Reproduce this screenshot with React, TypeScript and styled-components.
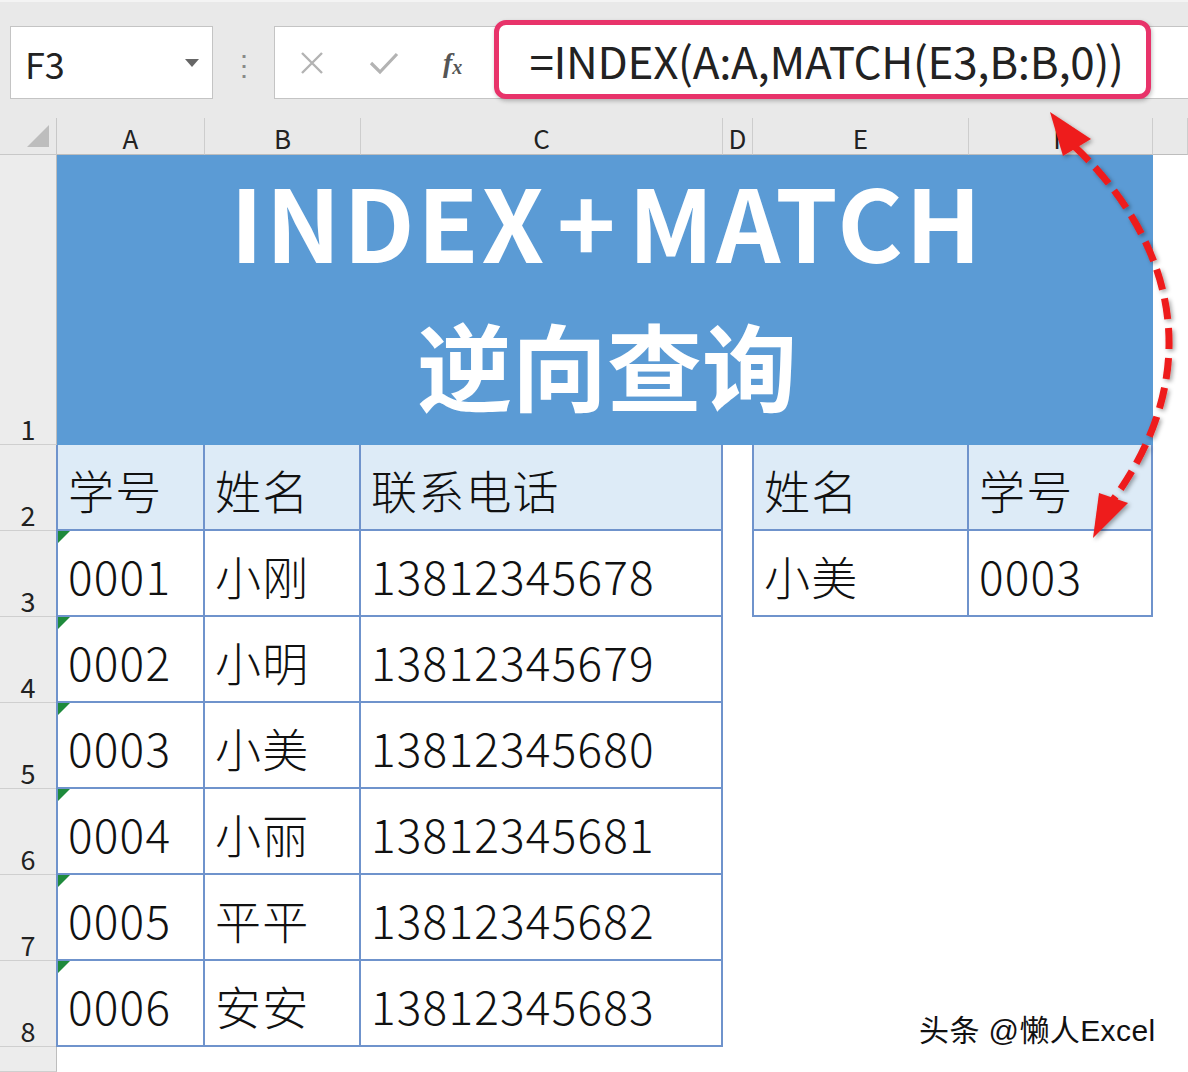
import styled, { createGlobalStyle } from 'styled-components';

const GlobalStyle = createGlobalStyle`
  body {
    margin: 0;
    background: #ffffff;
    overflow: hidden;
  }
  * {
    box-sizing: border-box;
  }
`;

const FONT = `"Noto Sans CJK SC", "Noto Sans", sans-serif`;
const GRID_BLUE = '#6f93cc';

const COLS = [57, 148, 156, 362, 30, 216, 184, 35];
const ROWS = [37, 290, 86, 86, 86, 86, 86, 86, 86, 25];

const students = [
  { id: '0001', name: '小刚', phone: '13812345678' },
  { id: '0002', name: '小明', phone: '13812345679' },
  { id: '0003', name: '小美', phone: '13812345680' },
  { id: '0004', name: '小丽', phone: '13812345681' },
  { id: '0005', name: '平平', phone: '13812345682' },
  { id: '0006', name: '安安', phone: '13812345683' },
];

export default function App() {
  return (
    <Page>
      <GlobalStyle />
      <FormulaBar>
        <NameBox>
          F3
          <DropArrow />
        </NameBox>
        <Grip>⋮</Grip>
        <FormulaBox>
          <ToolIcons>
            <svg width="26" height="26" viewBox="0 0 26 26">
              <path d="M3 3 L23 23 M23 3 L3 23" stroke="#b3b3b3" strokeWidth="2.4" />
            </svg>
            <svg width="30" height="26" viewBox="0 0 30 26">
              <path d="M2 13 L11 22 L28 4" stroke="#b3b3b3" strokeWidth="3.2" fill="none" />
            </svg>
            <Fx>
              f<sub>x</sub>
            </Fx>
          </ToolIcons>
          <Highlight>=INDEX(A:A,MATCH(E3,B:B,0))</Highlight>
        </FormulaBox>
      </FormulaBar>

      <Sheet>
        <Corner>
          <svg width="22" height="22" viewBox="0 0 22 22">
            <path d="M22 0 L22 22 L0 22 Z" fill="#bdbdbd" />
          </svg>
        </Corner>
        {['A', 'B', 'C', 'D', 'E', 'F', ''].map((letter, i) => (
          <ColHeader key={i} $col={i + 2}>
            {letter}
          </ColHeader>
        ))}
        {ROWS.slice(1).map((_, i) => (
          <RowHeader key={i} $row={i + 2}>
            {i < 8 ? i + 1 : ''}
          </RowHeader>
        ))}

        <TitleCell>
          <TitleLatin>
            INDEX<Plus>+</Plus>MATCH
          </TitleLatin>
          <TitleCn>逆向查询</TitleCn>
        </TitleCell>

        <Cell $row={3} $col={2} $head $left>学号</Cell>
        <Cell $row={3} $col={3} $head>姓名</Cell>
        <Cell $row={3} $col={4} $head>联系电话</Cell>
        {students.map((s, i) => (
          <Row key={s.id}>
            <Cell $row={i + 4} $col={2} $left $flag>
              {s.id}
            </Cell>
            <Cell $row={i + 4} $col={3}>{s.name}</Cell>
            <Cell $row={i + 4} $col={4}>{s.phone}</Cell>
          </Row>
        ))}

        <Cell $row={3} $col={6} $head $left>姓名</Cell>
        <Cell $row={3} $col={7} $head>学号</Cell>
        <Cell $row={4} $col={6} $left>小美</Cell>
        <Cell $row={4} $col={7}>0003</Cell>
      </Sheet>

      <ArrowLayer width="1188" height="1072" viewBox="0 0 1188 1072">
        <defs>
          <filter id="shadow" x="-20%" y="-20%" width="140%" height="140%">
            <feDropShadow dx="2" dy="2" stdDeviation="2" floodColor="#000" floodOpacity="0.35" />
          </filter>
        </defs>
        <g filter="url(#shadow)" fill="#ee1c1c">
          <path
            d="M1074 146 C1155 222, 1220 352, 1113 500"
            stroke="#ee1c1c"
            strokeWidth="7"
            strokeDasharray="21 9"
            fill="none"
          />
          <path d="M1050 112 L1091 139 L1063 156 Z" />
          <path d="M1093 538 L1099 493 L1128 503 Z" />
        </g>
      </ArrowLayer>

      <Watermark>头条 @懒人Excel</Watermark>
    </Page>
  );
}

const Page = styled.div`
  position: relative;
  width: 1188px;
  height: 1072px;
  overflow: hidden;
  background: #ffffff;
  font-family: ${FONT};
`;

const FormulaBar = styled.div`
  display: flex;
  align-items: flex-start;
  height: 118px;
  padding-top: 24px;
  background: #e9e9e9;
  border-top: 2px solid #f4f4f4;
`;

const NameBox = styled.div`
  position: relative;
  display: flex;
  align-items: center;
  margin-left: 10px;
  width: 203px;
  height: 73px;
  padding-left: 14px;
  background: #ffffff;
  border: 1px solid #c4c4c4;
  font-size: 36px;
  color: #222;
`;

const DropArrow = styled.span`
  position: absolute;
  right: 13px;
  top: 32px;
  width: 0;
  height: 0;
  border-left: 7px solid transparent;
  border-right: 7px solid transparent;
  border-top: 8px solid #666;
`;

const Grip = styled.div`
  width: 61px;
  height: 73px;
  display: flex;
  align-items: center;
  justify-content: center;
  font-size: 28px;
  color: #8a8a8a;
`;

const FormulaBox = styled.div`
  flex: 1;
  display: flex;
  align-items: center;
  height: 73px;
  background: #ffffff;
  border: 1px solid #c4c4c4;
  border-right: none;
`;

const ToolIcons = styled.div`
  display: flex;
  align-items: center;
  gap: 44px;
  width: 219px;
  padding-left: 24px;
`;

const Fx = styled.span`
  font-family: "Liberation Serif", serif;
  font-style: italic;
  font-weight: bold;
  font-size: 28px;
  color: #555;
  sub {
    font-size: 20px;
    vertical-align: -2px;
  }
`;

const Highlight = styled.div`
  display: flex;
  align-items: center;
  justify-content: center;
  width: 657px;
  height: 79px;
  margin-top: -6px;
  border: 5px solid #e8336a;
  border-radius: 12px;
  background: #ffffff;
  box-shadow: 1px 2px 4px rgba(0, 0, 0, 0.25);
  font-size: 44px;
  color: #222;
  padding-left: 8px;
  letter-spacing: -0.3px;
`;

const Sheet = styled.div`
  display: grid;
  grid-template-columns: ${COLS.map((c) => `${c}px`).join(' ')};
  grid-template-rows: ${ROWS.map((r) => `${r}px`).join(' ')};
`;

const Corner = styled.div`
  grid-row: 1;
  grid-column: 1;
  display: flex;
  align-items: flex-end;
  justify-content: flex-end;
  padding: 0 7px 7px 0;
  background: #e9e9e9;
  border-right: 1px solid #c8c8c8;
  border-bottom: 1px solid #c8c8c8;
`;

const ColHeader = styled.div<{ $col: number }>`
  grid-row: 1;
  grid-column: ${(p) => p.$col};
  display: flex;
  align-items: center;
  justify-content: center;
  padding-top: 4px;
  background: #e9e9e9;
  border-right: 1px solid #cdcdcd;
  border-bottom: 1px solid #bdbdbd;
  font-size: 26px;
  line-height: 1;
  color: #222;
`;

const RowHeader = styled.div<{ $row: number }>`
  grid-row: ${(p) => p.$row};
  grid-column: 1;
  display: flex;
  align-items: flex-end;
  justify-content: center;
  padding-bottom: 2px;
  background: #ececec;
  border-right: 1px solid #bdbdbd;
  border-bottom: 1px solid #cfcfcf;
  font-size: 27px;
  line-height: 1;
  color: #222;
`;

const TitleCell = styled.div`
  grid-row: 2;
  grid-column: 2 / 8;
  display: flex;
  flex-direction: column;
  align-items: center;
  justify-content: flex-start;
  gap: 24px;
  padding: 5px 0 0 4px;
  background: #5b9bd5;
  color: #ffffff;
  font-weight: 700;
`;

const TitleLatin = styled.div`
  display: flex;
  align-items: center;
  font-size: 100px;
  line-height: 120px;
  height: 120px;
  letter-spacing: 2.6px;
`;

const Plus = styled.span`
  margin: 0 10px 0 10px;
`;

const TitleCn = styled.div`
  font-size: 95px;
  line-height: 120px;
  height: 120px;
`;

const Row = styled.div`
  display: contents;
`;

const Cell = styled.div<{
  $row: number;
  $col: number;
  $head?: boolean;
  $left?: boolean;
  $flag?: boolean;
}>`
  position: relative;
  grid-row: ${(p) => p.$row};
  grid-column: ${(p) => p.$col};
  display: flex;
  align-items: center;
  padding: 4px 0 0 10px;
  background: ${(p) => (p.$head ? '#ddebf7' : '#ffffff')};
  border-right: 2px solid ${GRID_BLUE};
  border-bottom: 2px solid ${GRID_BLUE};
  border-left: ${(p) => (p.$left ? `2px solid ${GRID_BLUE}` : 'none')};
  margin-left: ${(p) => (p.$left ? '-1px' : '0')};
  font-size: 46px;
  font-weight: 300;
  letter-spacing: 1.2px;
  color: #111;
  white-space: nowrap;

  &::before {
    content: '';
    display: ${(p) => (p.$flag ? 'block' : 'none')};
    position: absolute;
    left: 0;
    top: 0;
    width: 0;
    height: 0;
    border-top: 12px solid #1e8a3c;
    border-right: 12px solid transparent;
  }
`;

const ArrowLayer = styled.svg`
  position: absolute;
  left: 0;
  top: 0;
  pointer-events: none;
`;

const Watermark = styled.div`
  position: absolute;
  left: 919px;
  top: 1006px;
  font-family: "Liberation Sans", "Noto Sans CJK SC", sans-serif;
  font-size: 30px;
  letter-spacing: 0.4px;
  color: #111;
  text-shadow: 1px 1px 0 #ffffff, -1px 0 0 #ffffff;
`;
